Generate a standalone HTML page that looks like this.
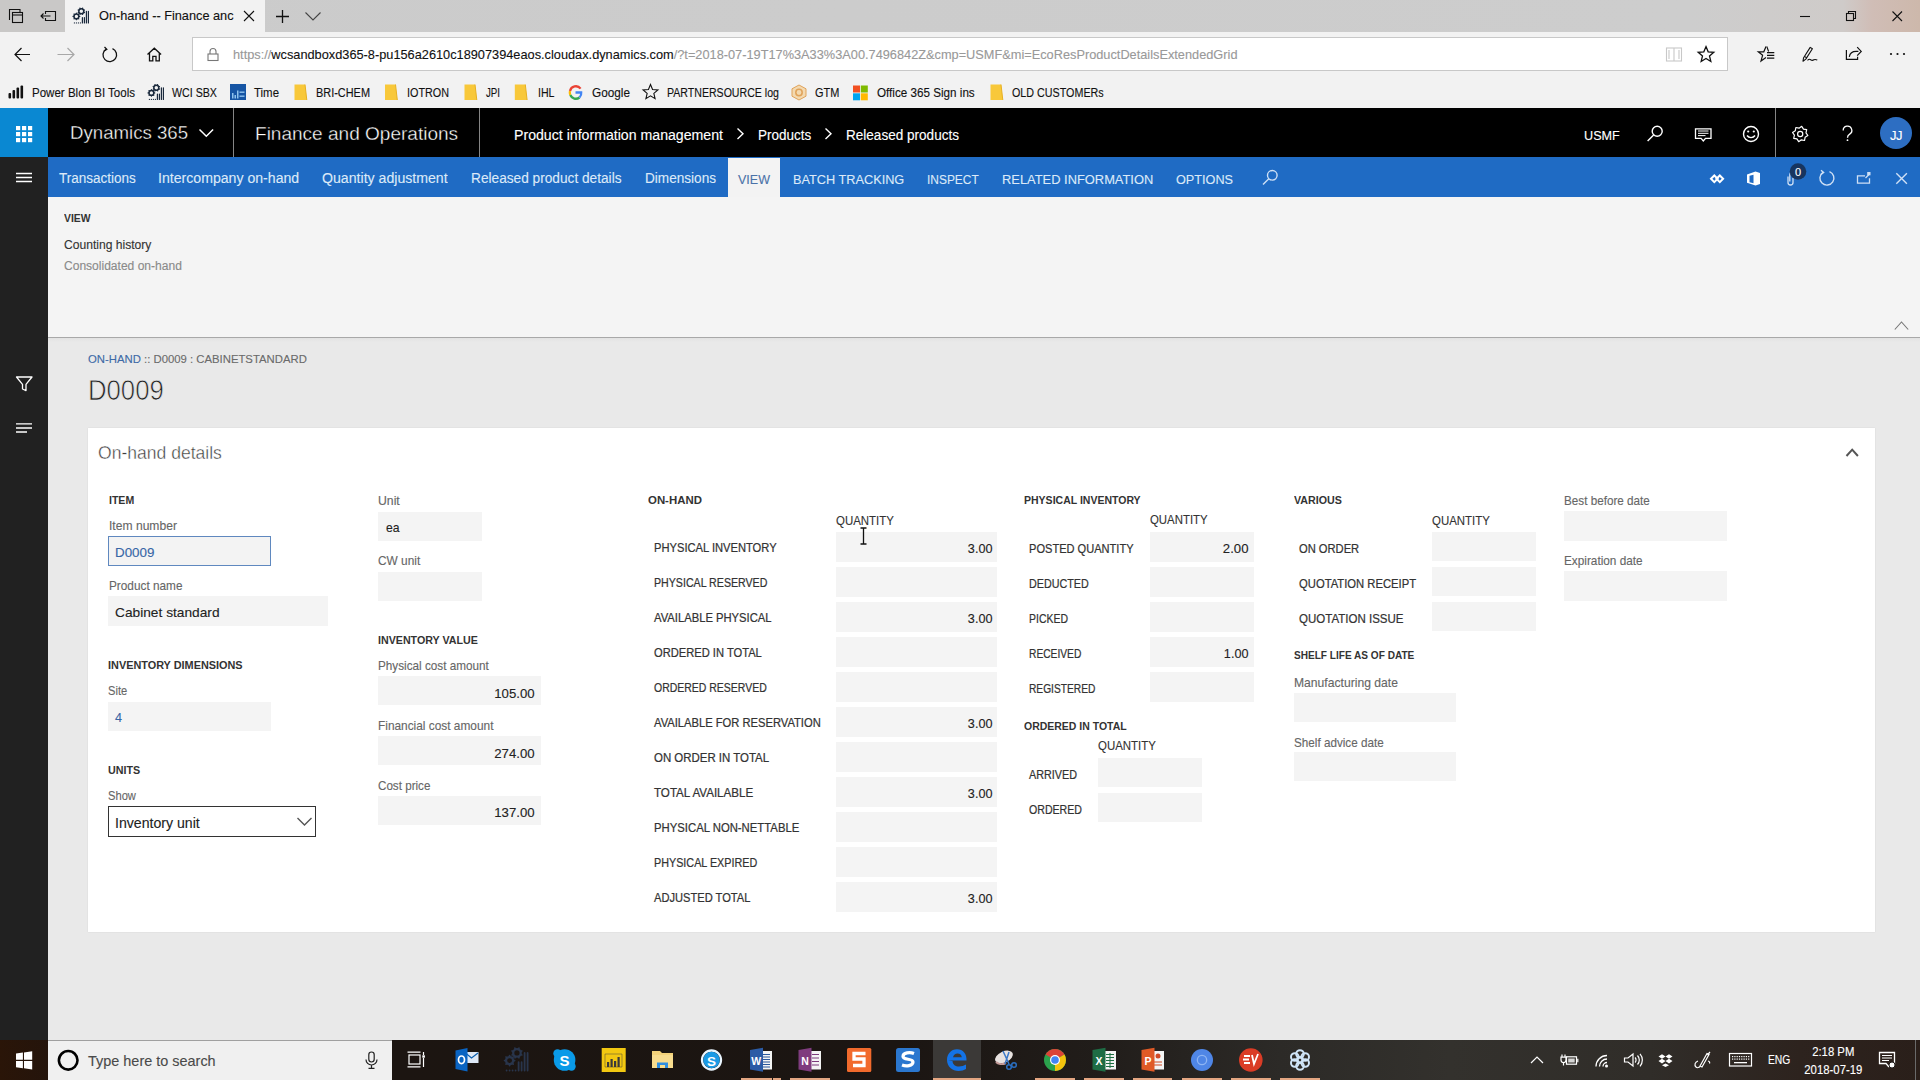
<!DOCTYPE html>
<html><head><meta charset="utf-8"><style>
*{margin:0;padding:0;box-sizing:border-box}
html,body{width:1920px;height:1080px;overflow:hidden;background:#e9e9e9;font-family:"Liberation Sans",sans-serif;color:#333}
.a{position:absolute}
.t{position:absolute;white-space:nowrap;line-height:1;z-index:3;-webkit-text-stroke:0.12px currentColor}
svg{position:absolute;overflow:visible;z-index:2}
</style></head><body>
<div class="a" style="left:0px;top:0px;width:1920px;height:32px;background:linear-gradient(90deg,#cbcbcb 0%,#cdcdcd 88%,#cfcbc9 96%,#d0bdb6 97.5%,#cdb8ab 100%);"></div>
<div class="a" style="left:0px;top:0px;width:65px;height:32px;background:#c9c8c7;"></div>
<div class="a" style="left:65px;top:0px;width:200px;height:32px;background:#f2f2f2;"></div>
<div class="a" style="left:0px;top:32px;width:1920px;height:76px;background:#f2f2f2;"></div>
<div class="a" style="left:192px;top:37px;width:1536px;height:34px;background:#fff;border:1px solid #c8c8c8;"></div>
<div class="a" style="left:0px;top:108px;width:1920px;height:49px;background:#000;"></div>
<div class="a" style="left:0px;top:108px;width:48px;height:49px;background:#0a88d2;"></div>
<div class="a" style="left:48px;top:157px;width:1872px;height:40px;background:#1f6bc4;"></div>
<div class="a" style="left:0px;top:157px;width:48px;height:883px;background:#212121;"></div>
<div class="a" style="left:48px;top:197px;width:1872px;height:141px;background:#f4f4f4;border-bottom:1px solid #a8a8a8;"></div>
<div class="a" style="left:48px;top:338px;width:1872px;height:702px;background:linear-gradient(180deg,#e2e2e2 0px,#e9e9e9 4px,#e9e9e9 100%);"></div>
<div class="a" style="left:88px;top:428px;width:1787px;height:504px;background:#fff;box-shadow:0 0 1.5px rgba(0,0,0,0.10);"></div>
<div class="a" style="left:0px;top:1040px;width:1920px;height:40px;background:linear-gradient(90deg,#2a1508 0px,#24140b 48px,#1c1511 392px,#1b1512 900px,#211d1a 1100px,#2c2a27 1280px,#33312d 1450px,#302d29 1650px,#2d231e 1800px,#2a1f1a 1920px);"></div>
<div class="a" style="left:48px;top:1040px;width:344px;height:40px;background:#f0f0f0;border-top:1px solid #a0a0a0;"></div>
<div class="t" style="left:98.60px;top:9.70px;font-size:12.7px;color:#111;transform:scaleX(1.0044);transform-origin:0 0;">On-hand -- Finance anc</div>
<div class="t" style="left:233.00px;top:48.76px;font-size:12.75px;color:#333;transform:scaleX(1.0012);transform-origin:0 0;"><span style="color:#999">https://</span><span style="color:#111">wcsandboxd365-8-pu156a2610c18907394eaos.cloudax.dynamics.com</span><span style="color:#999">/?t=2018-07-19T17%3A33%3A00.7496842Z&amp;cmp=USMF&amp;mi=EcoResProductDetailsExtendedGrid</span></div>
<div class="t" style="left:32.00px;top:86.80px;font-size:12px;color:#111;transform:scaleX(0.9612);transform-origin:0 0;">Power Blon BI Tools</div>
<div class="t" style="left:172.00px;top:86.80px;font-size:12px;color:#111;transform:scaleX(0.8876);transform-origin:0 0;">WCI SBX</div>
<div class="t" style="left:254.00px;top:86.80px;font-size:12px;color:#111;transform:scaleX(0.9535);transform-origin:0 0;">Time</div>
<div class="t" style="left:316.00px;top:86.80px;font-size:12px;color:#111;transform:scaleX(0.9100);transform-origin:0 0;">BRI-CHEM</div>
<div class="t" style="left:407.00px;top:86.80px;font-size:12px;color:#111;transform:scaleX(0.8997);transform-origin:0 0;">IOTRON</div>
<div class="t" style="left:486.00px;top:86.80px;font-size:12px;color:#111;transform:scaleX(0.8074);transform-origin:0 0;">JPI</div>
<div class="t" style="left:538.00px;top:86.80px;font-size:12px;color:#111;transform:scaleX(0.8842);transform-origin:0 0;">IHL</div>
<div class="t" style="left:592.00px;top:86.80px;font-size:12px;color:#111;transform:scaleX(0.9819);transform-origin:0 0;">Google</div>
<div class="t" style="left:667.30px;top:86.80px;font-size:12px;color:#111;transform:scaleX(0.8818);transform-origin:0 0;">PARTNERSOURCE log</div>
<div class="t" style="left:815.00px;top:86.80px;font-size:12px;color:#111;transform:scaleX(0.9122);transform-origin:0 0;">GTM</div>
<div class="t" style="left:877.20px;top:86.80px;font-size:12px;color:#111;transform:scaleX(0.9721);transform-origin:0 0;">Office 365 Sign ins</div>
<div class="t" style="left:1012.00px;top:86.80px;font-size:12px;color:#111;transform:scaleX(0.8948);transform-origin:0 0;">OLD CUSTOMERs</div>
<div class="t" style="left:69.80px;top:124.12px;font-size:18.8px;color:#fff;transform:scaleX(0.9925);transform-origin:0 0;-webkit-text-stroke:0.35px #000;">Dynamics 365</div>
<div class="t" style="left:255.00px;top:123.88px;font-size:19.2px;color:#fff;transform:scaleX(0.9919);transform-origin:0 0;-webkit-text-stroke:0.35px #000;">Finance and Operations</div>
<div class="t" style="left:514.20px;top:128.00px;font-size:14px;color:#fff;transform:scaleX(1.0097);transform-origin:0 0;">Product information management</div>
<div class="t" style="left:758.25px;top:128.00px;font-size:14px;color:#fff;transform:scaleX(0.9641);transform-origin:0 0;">Products</div>
<div class="t" style="left:846.25px;top:128.00px;font-size:14px;color:#fff;transform:scaleX(0.9678);transform-origin:0 0;">Released products</div>
<div class="t" style="left:1584.20px;top:129.38px;font-size:13.2px;color:#fff;transform:scaleX(0.9593);transform-origin:0 0;">USMF</div>
<div class="t" style="left:59.20px;top:172.37px;font-size:13.8px;color:#dce9f8;transform:scaleX(0.9781);transform-origin:0 0;">Transactions</div>
<div class="t" style="left:158.20px;top:172.37px;font-size:13.8px;color:#dce9f8;transform:scaleX(1.0227);transform-origin:0 0;">Intercompany on-hand</div>
<div class="t" style="left:322.30px;top:172.37px;font-size:13.8px;color:#dce9f8;transform:scaleX(1.0240);transform-origin:0 0;">Quantity adjustment</div>
<div class="t" style="left:471.25px;top:172.37px;font-size:13.8px;color:#dce9f8;transform:scaleX(0.9913);transform-origin:0 0;">Released product details</div>
<div class="t" style="left:644.50px;top:172.37px;font-size:13.8px;color:#dce9f8;transform:scaleX(0.9847);transform-origin:0 0;">Dimensions</div>
<div class="a" style="left:728px;top:158px;width:52px;height:39px;background:#f3f3f3;"></div>
<div class="t" style="left:738.00px;top:173.29px;font-size:13.3px;color:#4a72a8;transform:scaleX(0.9417);transform-origin:0 0;">VIEW</div>
<div class="t" style="left:793.00px;top:173.29px;font-size:13.3px;color:#dce9f8;transform:scaleX(0.9571);transform-origin:0 0;">BATCH TRACKING</div>
<div class="t" style="left:927.00px;top:173.29px;font-size:13.3px;color:#dce9f8;transform:scaleX(0.8976);transform-origin:0 0;">INSPECT</div>
<div class="t" style="left:1001.70px;top:173.29px;font-size:13.3px;color:#dce9f8;transform:scaleX(0.9690);transform-origin:0 0;">RELATED INFORMATION</div>
<div class="t" style="left:1176.00px;top:173.29px;font-size:13.3px;color:#dce9f8;transform:scaleX(0.9524);transform-origin:0 0;">OPTIONS</div>
<div class="t" style="left:63.70px;top:213.45px;font-size:11px;color:#333;font-weight:bold;-webkit-text-stroke:0;transform:scaleX(0.9429);transform-origin:0 0;">VIEW</div>
<div class="t" style="left:64.30px;top:238.64px;font-size:12.3px;color:#333;transform:scaleX(0.9835);transform-origin:0 0;">Counting history</div>
<div class="t" style="left:64.30px;top:259.95px;font-size:12.3px;color:#8a8a8a;transform:scaleX(0.9796);transform-origin:0 0;">Consolidated on-hand</div>
<div class="t" style="left:88.30px;top:353.57px;font-size:11.8px;color:#6b6b6b;transform:scaleX(0.9602);transform-origin:0 0;"><span style="color:#3e6aa6">ON-HAND</span> :: D0009 : CABINETSTANDARD</div>
<div class="t" style="left:88.00px;top:375.95px;font-size:29px;color:#222;transform:scaleX(0.8864);transform-origin:0 0;-webkit-text-stroke:0.75px #e9e9e9;">D0009</div>
<div class="t" style="left:98.20px;top:444.67px;font-size:17.8px;color:#3a3a3a;transform:scaleX(0.9867);transform-origin:0 0;-webkit-text-stroke:0.4px #fff;">On-hand details</div>
<div class="t" style="left:108.50px;top:494.24px;font-size:11.6px;color:#333;font-weight:bold;-webkit-text-stroke:0;transform:scaleX(0.9090);transform-origin:0 0;">ITEM</div>
<div class="t" style="left:108.50px;top:520.36px;font-size:12.4px;color:#666;transform:scaleX(0.9766);transform-origin:0 0;">Item number</div>
<div class="a" style="left:108px;top:536px;width:163px;height:30px;background:#f3f3f3;border:1px solid #5f88bf;"></div>
<div class="t" style="left:115.30px;top:545.94px;font-size:13.6px;color:#3766a6;transform:scaleX(0.9837);transform-origin:0 0;">D0009</div>
<div class="t" style="left:108.50px;top:580.26px;font-size:12.4px;color:#666;transform:scaleX(0.9522);transform-origin:0 0;">Product name</div>
<div class="a" style="left:108px;top:596px;width:220px;height:30px;background:#f4f4f4;"></div>
<div class="t" style="left:115.30px;top:605.84px;font-size:13.6px;color:#222;transform:scaleX(1.0100);transform-origin:0 0;">Cabinet standard</div>
<div class="t" style="left:108.30px;top:659.04px;font-size:11.6px;color:#333;font-weight:bold;-webkit-text-stroke:0;transform:scaleX(0.9383);transform-origin:0 0;">INVENTORY DIMENSIONS</div>
<div class="t" style="left:108.30px;top:685.26px;font-size:12.4px;color:#666;transform:scaleX(0.8976);transform-origin:0 0;">Site</div>
<div class="a" style="left:108px;top:701.5px;width:163px;height:29px;background:#f4f4f4;"></div>
<div class="t" style="left:115.20px;top:710.94px;font-size:13.6px;color:#3766a6;transform:scaleX(0.9274);transform-origin:0 0;">4</div>
<div class="t" style="left:108.30px;top:764.04px;font-size:11.6px;color:#333;font-weight:bold;-webkit-text-stroke:0;transform:scaleX(0.9253);transform-origin:0 0;">UNITS</div>
<div class="t" style="left:108.30px;top:789.86px;font-size:12.4px;color:#666;transform:scaleX(0.9014);transform-origin:0 0;">Show</div>
<div class="a" style="left:108px;top:806px;width:208px;height:31px;background:#fff;border:1px solid #333;"></div>
<div class="t" style="left:115.20px;top:815.80px;font-size:14.0px;color:#222;transform:scaleX(1.0087);transform-origin:0 0;">Inventory unit</div>
<div class="t" style="left:378.00px;top:495.46px;font-size:12.4px;color:#666;transform:scaleX(0.9877);transform-origin:0 0;">Unit</div>
<div class="a" style="left:378px;top:511.5px;width:104px;height:29px;background:#f4f4f4;"></div>
<div class="t" style="left:385.60px;top:521.24px;font-size:13.6px;color:#222;transform:scaleX(0.8969);transform-origin:0 0;">ea</div>
<div class="t" style="left:378.30px;top:555.46px;font-size:12.4px;color:#666;transform:scaleX(0.9573);transform-origin:0 0;">CW unit</div>
<div class="a" style="left:378px;top:571.5px;width:104px;height:29px;background:#f4f4f4;"></div>
<div class="t" style="left:378.00px;top:633.94px;font-size:11.6px;color:#333;font-weight:bold;-webkit-text-stroke:0;transform:scaleX(0.9206);transform-origin:0 0;">INVENTORY VALUE</div>
<div class="t" style="left:378.30px;top:660.06px;font-size:12.4px;color:#666;transform:scaleX(0.9464);transform-origin:0 0;">Physical cost amount</div>
<div class="a" style="left:378px;top:676.3px;width:163px;height:29px;background:#f4f4f4;"></div>
<div class="t" style="right:1385.40px;top:686.54px;font-size:13.6px;color:#222;transform:scaleX(0.9708);transform-origin:100% 0;">105.00</div>
<div class="t" style="left:378.30px;top:720.06px;font-size:12.4px;color:#666;transform:scaleX(0.9578);transform-origin:0 0;">Financial cost amount</div>
<div class="a" style="left:378px;top:736.3px;width:163px;height:29px;background:#f4f4f4;"></div>
<div class="t" style="right:1385.40px;top:746.54px;font-size:13.6px;color:#222;transform:scaleX(0.9708);transform-origin:100% 0;">274.00</div>
<div class="t" style="left:378.30px;top:779.96px;font-size:12.4px;color:#666;transform:scaleX(0.9391);transform-origin:0 0;">Cost price</div>
<div class="a" style="left:378px;top:796.2px;width:163px;height:29px;background:#f4f4f4;"></div>
<div class="t" style="right:1385.40px;top:806.44px;font-size:13.6px;color:#222;transform:scaleX(0.9708);transform-origin:100% 0;">137.00</div>
<div class="t" style="left:648.10px;top:493.94px;font-size:11.6px;color:#333;font-weight:bold;-webkit-text-stroke:0;transform:scaleX(0.9844);transform-origin:0 0;">ON-HAND</div>
<div class="t" style="left:836.10px;top:514.63px;font-size:12.2px;color:#333;transform:scaleX(0.9389);transform-origin:0 0;">QUANTITY</div>
<div class="t" style="left:653.50px;top:542.43px;font-size:12.2px;color:#333;transform:scaleX(0.9156);transform-origin:0 0;-webkit-text-stroke:0.22px #333;">PHYSICAL INVENTORY</div>
<div class="a" style="left:836px;top:532px;width:161px;height:30px;background:#f4f4f4;"></div>
<div class="t" style="right:927.80px;top:542.24px;font-size:13.6px;color:#222;transform:scaleX(0.9300);transform-origin:100% 0;">3.00</div>
<div class="t" style="left:653.50px;top:577.43px;font-size:12.2px;color:#333;transform:scaleX(0.8719);transform-origin:0 0;-webkit-text-stroke:0.22px #333;">PHYSICAL RESERVED</div>
<div class="a" style="left:836px;top:567px;width:161px;height:30px;background:#f4f4f4;"></div>
<div class="t" style="left:653.50px;top:612.43px;font-size:12.2px;color:#333;transform:scaleX(0.9214);transform-origin:0 0;-webkit-text-stroke:0.22px #333;">AVAILABLE PHYSICAL</div>
<div class="a" style="left:836px;top:602px;width:161px;height:30px;background:#f4f4f4;"></div>
<div class="t" style="right:927.80px;top:612.24px;font-size:13.6px;color:#222;transform:scaleX(0.9300);transform-origin:100% 0;">3.00</div>
<div class="t" style="left:653.50px;top:647.43px;font-size:12.2px;color:#333;transform:scaleX(0.9146);transform-origin:0 0;-webkit-text-stroke:0.22px #333;">ORDERED IN TOTAL</div>
<div class="a" style="left:836px;top:637px;width:161px;height:30px;background:#f4f4f4;"></div>
<div class="t" style="left:653.50px;top:682.43px;font-size:12.2px;color:#333;transform:scaleX(0.8593);transform-origin:0 0;-webkit-text-stroke:0.22px #333;">ORDERED RESERVED</div>
<div class="a" style="left:836px;top:672px;width:161px;height:30px;background:#f4f4f4;"></div>
<div class="t" style="left:653.50px;top:717.43px;font-size:12.2px;color:#333;transform:scaleX(0.9175);transform-origin:0 0;-webkit-text-stroke:0.22px #333;">AVAILABLE FOR RESERVATION</div>
<div class="a" style="left:836px;top:707px;width:161px;height:30px;background:#f4f4f4;"></div>
<div class="t" style="right:927.80px;top:717.24px;font-size:13.6px;color:#222;transform:scaleX(0.9300);transform-origin:100% 0;">3.00</div>
<div class="t" style="left:653.50px;top:752.43px;font-size:12.2px;color:#333;transform:scaleX(0.9391);transform-origin:0 0;-webkit-text-stroke:0.22px #333;">ON ORDER IN TOTAL</div>
<div class="a" style="left:836px;top:742px;width:161px;height:30px;background:#f4f4f4;"></div>
<div class="t" style="left:653.50px;top:787.43px;font-size:12.2px;color:#333;transform:scaleX(0.9509);transform-origin:0 0;-webkit-text-stroke:0.22px #333;">TOTAL AVAILABLE</div>
<div class="a" style="left:836px;top:777px;width:161px;height:30px;background:#f4f4f4;"></div>
<div class="t" style="right:927.80px;top:787.24px;font-size:13.6px;color:#222;transform:scaleX(0.9300);transform-origin:100% 0;">3.00</div>
<div class="t" style="left:653.50px;top:822.43px;font-size:12.2px;color:#333;transform:scaleX(0.9286);transform-origin:0 0;-webkit-text-stroke:0.22px #333;">PHYSICAL NON-NETTABLE</div>
<div class="a" style="left:836px;top:812px;width:161px;height:30px;background:#f4f4f4;"></div>
<div class="t" style="left:653.50px;top:857.43px;font-size:12.2px;color:#333;transform:scaleX(0.8847);transform-origin:0 0;-webkit-text-stroke:0.22px #333;">PHYSICAL EXPIRED</div>
<div class="a" style="left:836px;top:847px;width:161px;height:30px;background:#f4f4f4;"></div>
<div class="t" style="left:653.50px;top:892.43px;font-size:12.2px;color:#333;transform:scaleX(0.9123);transform-origin:0 0;-webkit-text-stroke:0.22px #333;">ADJUSTED TOTAL</div>
<div class="a" style="left:836px;top:882px;width:161px;height:30px;background:#f4f4f4;"></div>
<div class="t" style="right:927.80px;top:892.24px;font-size:13.6px;color:#222;transform:scaleX(0.9300);transform-origin:100% 0;">3.00</div>
<div class="t" style="left:1024.00px;top:493.64px;font-size:11.6px;color:#333;font-weight:bold;-webkit-text-stroke:0;transform:scaleX(0.9067);transform-origin:0 0;">PHYSICAL INVENTORY</div>
<div class="t" style="left:1150.00px;top:514.43px;font-size:12.2px;color:#333;transform:scaleX(0.9356);transform-origin:0 0;">QUANTITY</div>
<div class="t" style="left:1029.30px;top:542.73px;font-size:12.2px;color:#333;transform:scaleX(0.9086);transform-origin:0 0;-webkit-text-stroke:0.22px #333;">POSTED QUANTITY</div>
<div class="a" style="left:1150px;top:532px;width:104px;height:30px;background:#f4f4f4;"></div>
<div class="t" style="right:671.70px;top:541.64px;font-size:13.6px;color:#222;transform:scaleX(0.9678);transform-origin:100% 0;">2.00</div>
<div class="t" style="left:1029.30px;top:577.73px;font-size:12.2px;color:#333;transform:scaleX(0.8809);transform-origin:0 0;-webkit-text-stroke:0.22px #333;">DEDUCTED</div>
<div class="a" style="left:1150px;top:567px;width:104px;height:30px;background:#f4f4f4;"></div>
<div class="t" style="left:1029.30px;top:612.73px;font-size:12.2px;color:#333;transform:scaleX(0.8582);transform-origin:0 0;-webkit-text-stroke:0.22px #333;">PICKED</div>
<div class="a" style="left:1150px;top:602px;width:104px;height:30px;background:#f4f4f4;"></div>
<div class="t" style="left:1029.30px;top:647.73px;font-size:12.2px;color:#333;transform:scaleX(0.8397);transform-origin:0 0;-webkit-text-stroke:0.22px #333;">RECEIVED</div>
<div class="a" style="left:1150px;top:637px;width:104px;height:30px;background:#f4f4f4;"></div>
<div class="t" style="right:671.70px;top:646.64px;font-size:13.6px;color:#222;transform:scaleX(0.9300);transform-origin:100% 0;">1.00</div>
<div class="t" style="left:1029.30px;top:682.73px;font-size:12.2px;color:#333;transform:scaleX(0.8373);transform-origin:0 0;-webkit-text-stroke:0.22px #333;">REGISTERED</div>
<div class="a" style="left:1150px;top:672px;width:104px;height:30px;background:#f4f4f4;"></div>
<div class="t" style="left:1024.00px;top:720.24px;font-size:11.6px;color:#333;font-weight:bold;-webkit-text-stroke:0;transform:scaleX(0.9039);transform-origin:0 0;">ORDERED IN TOTAL</div>
<div class="t" style="left:1097.70px;top:740.43px;font-size:12.2px;color:#333;transform:scaleX(0.9405);transform-origin:0 0;">QUANTITY</div>
<div class="t" style="left:1029.30px;top:768.73px;font-size:12.2px;color:#333;transform:scaleX(0.8851);transform-origin:0 0;-webkit-text-stroke:0.22px #333;">ARRIVED</div>
<div class="a" style="left:1098px;top:758.3px;width:104px;height:29px;background:#f4f4f4;"></div>
<div class="t" style="left:1029.30px;top:803.73px;font-size:12.2px;color:#333;transform:scaleX(0.8689);transform-origin:0 0;-webkit-text-stroke:0.22px #333;">ORDERED</div>
<div class="a" style="left:1098px;top:793.3px;width:104px;height:29px;background:#f4f4f4;"></div>
<div class="t" style="left:1294.00px;top:494.34px;font-size:11.6px;color:#333;font-weight:bold;-webkit-text-stroke:0;transform:scaleX(0.9217);transform-origin:0 0;">VARIOUS</div>
<div class="t" style="left:1431.60px;top:514.83px;font-size:12.2px;color:#333;transform:scaleX(0.9372);transform-origin:0 0;">QUANTITY</div>
<div class="t" style="left:1298.75px;top:543.03px;font-size:12.2px;color:#333;transform:scaleX(0.9162);transform-origin:0 0;-webkit-text-stroke:0.22px #333;">ON ORDER</div>
<div class="a" style="left:1431.6px;top:531.6px;width:104px;height:29px;background:#f4f4f4;"></div>
<div class="t" style="left:1298.75px;top:578.03px;font-size:12.2px;color:#333;transform:scaleX(0.9232);transform-origin:0 0;-webkit-text-stroke:0.22px #333;">QUOTATION RECEIPT</div>
<div class="a" style="left:1431.6px;top:566.6px;width:104px;height:29px;background:#f4f4f4;"></div>
<div class="t" style="left:1298.75px;top:613.03px;font-size:12.2px;color:#333;transform:scaleX(0.9452);transform-origin:0 0;-webkit-text-stroke:0.22px #333;">QUOTATION ISSUE</div>
<div class="a" style="left:1431.6px;top:601.6px;width:104px;height:29px;background:#f4f4f4;"></div>
<div class="t" style="left:1294.00px;top:649.34px;font-size:11.6px;color:#333;font-weight:bold;-webkit-text-stroke:0;transform:scaleX(0.8689);transform-origin:0 0;">SHELF LIFE AS OF DATE</div>
<div class="t" style="left:1294.00px;top:676.51px;font-size:12.4px;color:#666;transform:scaleX(0.9798);transform-origin:0 0;">Manufacturing date</div>
<div class="a" style="left:1294px;top:692.5px;width:162px;height:29px;background:#f4f4f4;"></div>
<div class="t" style="left:1294.00px;top:736.51px;font-size:12.4px;color:#666;transform:scaleX(0.9437);transform-origin:0 0;">Shelf advice date</div>
<div class="a" style="left:1294px;top:752px;width:162px;height:29px;background:#f4f4f4;"></div>
<div class="t" style="left:1564.40px;top:495.26px;font-size:12.4px;color:#666;transform:scaleX(0.9438);transform-origin:0 0;">Best before date</div>
<div class="a" style="left:1564px;top:510.5px;width:163px;height:30px;background:#f4f4f4;"></div>
<div class="t" style="left:1564.40px;top:555.26px;font-size:12.4px;color:#666;transform:scaleX(0.9515);transform-origin:0 0;">Expiration date</div>
<div class="a" style="left:1564px;top:570.6px;width:163px;height:30px;background:#f4f4f4;"></div>
<div class="t" style="left:88.30px;top:1054.44px;font-size:14.3px;color:#4a4a4a;transform:scaleX(1.0102);transform-origin:0 0;">Type here to search</div>
<div class="t" style="left:1767.50px;top:1054.27px;font-size:12.5px;color:#fff;transform:scaleX(0.8240);transform-origin:0 0;">ENG</div>
<div class="t" style="right:66.10px;top:1046.03px;font-size:12.2px;color:#fff;transform:scaleX(0.9308);transform-origin:100% 0;">2:18 PM</div>
<div class="t" style="right:58.00px;top:1063.73px;font-size:12.2px;color:#fff;transform:scaleX(0.9310);transform-origin:100% 0;">2018-07-19</div>
<div class="t" style="left:1696px;width:400px;text-align:center;top:129.05px;font-size:13px;color:#fff;letter-spacing:-0.5px;">JJ</div>
<div class="t" style="left:1598px;width:400px;text-align:center;top:167.05px;font-size:11px;color:#fff;">0</div>
<div class="t" style="left:364.6px;width:400px;text-align:center;top:1053.35px;font-size:15px;color:#fff;font-weight:bold;-webkit-text-stroke:0;">S</div>
<div class="t" style="left:511.5px;width:400px;text-align:center;top:1054.62px;font-size:13.5px;color:#fff;font-weight:bold;-webkit-text-stroke:0;">S</div>
<div class="t" style="left:556.3px;width:400px;text-align:center;top:1056.17px;font-size:10.5px;color:#fff;font-weight:bold;-webkit-text-stroke:0;">W</div>
<div class="t" style="left:605px;width:400px;text-align:center;top:1056.17px;font-size:10.5px;color:#fff;font-weight:bold;-webkit-text-stroke:0;">N</div>
<div class="a" style="left:933px;top:1040px;width:48px;height:40px;background:#3b3937;"></div>
<div class="t" style="left:899px;width:400px;text-align:center;top:1056.17px;font-size:10.5px;color:#fff;font-weight:bold;-webkit-text-stroke:0;">X</div>
<div class="t" style="left:948px;width:400px;text-align:center;top:1056.17px;font-size:10.5px;color:#fff;font-weight:bold;-webkit-text-stroke:0;">P</div>
<div class="a" style="left:741px;top:1078px;width:31px;height:2px;background:#e3a682;"></div>
<div class="a" style="left:773px;top:1078px;width:8px;height:2px;background:#e3a682;"></div>
<div class="a" style="left:790px;top:1078px;width:40px;height:2px;background:#e3a682;"></div>
<div class="a" style="left:933px;top:1078px;width:48px;height:2px;background:#e3a682;"></div>
<div class="a" style="left:1035px;top:1078px;width:40px;height:2px;background:#e3a682;"></div>
<div class="a" style="left:1084px;top:1078px;width:40px;height:2px;background:#e3a682;"></div>
<div class="a" style="left:1133px;top:1078px;width:39.40000000000009px;height:2px;background:#e3a682;"></div>
<div class="a" style="left:1182px;top:1078px;width:40px;height:2px;background:#e3a682;"></div>
<div class="a" style="left:1231px;top:1078px;width:40px;height:2px;background:#e3a682;"></div>
<div class="a" style="left:1279.5px;top:1078px;width:40.799999999999955px;height:2px;background:#e3a682;"></div>
<div class="a" style="left:1915px;top:1040px;width:1px;height:40px;background:#6a6a6a;"></div>
<svg width="1920" height="1080" style="position:absolute;left:0;top:0"><g fill="none" stroke="#111" stroke-width="1.1"><path d="M9.5 20V9.5h10.5v2.5"/><rect x="12.5" y="12.5" width="10" height="10"/><path d="M12.5 15h10"/></g><g fill="none" stroke="#111" stroke-width="1.1"><path d="M45.5 14V11.5h10v9h-10V18"/><path d="M41 16h9.5M43.5 13.5L41 16l2.5 2.5"/></g><g transform="translate(68,4)"><circle cx="8.4" cy="12.4" r="2.4" fill="none" stroke="#1b2a3d" stroke-width="1.5"/><circle cx="13.3" cy="7.3" r="2.5" fill="none" stroke="#1b2a3d" stroke-width="1.5"/><g stroke="#1b2a3d" stroke-width="1.1" stroke-linecap="round"><path d="M11.00 12.40L11.80 12.40"/><path d="M15.80 8.33L16.54 8.63"/><path d="M10.24 14.24L10.80 14.80"/><path d="M14.34 9.79L14.65 10.53"/><path d="M8.40 15.00L8.40 15.80"/><path d="M12.27 9.80L11.97 10.54"/><path d="M6.56 14.24L6.00 14.80"/><path d="M10.81 8.34L10.07 8.65"/><path d="M5.80 12.40L5.00 12.40"/><path d="M10.80 6.27L10.06 5.97"/><path d="M6.56 10.56L6.00 10.00"/><path d="M12.26 4.81L11.95 4.07"/><path d="M8.40 9.80L8.40 9.00"/><path d="M14.33 4.80L14.63 4.06"/><path d="M10.24 10.56L10.80 10.00"/><path d="M15.79 6.26L16.53 5.95"/></g><g stroke="#1b2a3d" stroke-width="1.2" stroke-linecap="round"><path d="M14.4 13.5V19M16.4 13.5V19M18.4 7.3V19M20.4 7.3V19M6.4 18.9v0.1M8.4 18.9v0.1M10.4 18.9v0.1M12.4 18.9v0.1"/></g></g><path d="M244 11l10 10M254 11l-10 10" stroke="#111" stroke-width="1.1"/><path d="M282.5 10v13M276 16.5h13" stroke="#111" stroke-width="1.3"/><path d="M305.5 12.5l7.5 7.5 7.5-7.5" fill="none" stroke="#444" stroke-width="1.1"/><path d="M1800 16.5h10" stroke="#111" stroke-width="1.1"/><g fill="none" stroke="#111" stroke-width="1.1"><rect x="1846.5" y="13.5" width="7" height="7"/><path d="M1848.5 13.5v-2h7v7h-2"/></g><path d="M1892.5 11.5l9.5 9.5M1902 11.5l-9.5 9.5" stroke="#111" stroke-width="1.1"/><g fill="none" stroke="#111" stroke-width="1.2"><path d="M15 54.5h15M21.5 48l-6.5 6.5 6.5 6.5"/></g><g fill="none" stroke="#a8a8a8" stroke-width="1.2"><path d="M57.5 54.5h16M67.5 48l6.5 6.5-6.5 6.5"/></g><g fill="none" stroke="#111" stroke-width="1.3"><path d="M106 49.2A6.8 6.8 0 1 0 112.5 48.6"/><path d="M104.5 47l2.3 2.4-2.9 1.6"/></g><g fill="none" stroke="#111" stroke-width="1.3"><path d="M147.5 54.5l6.8-6.3 6.8 6.3M149.5 53v7.8h3.3v-4.5h3.2v4.5h3.3V53"/></g><g fill="none" stroke="#777" stroke-width="1.1"><rect x="208" y="54" width="10" height="6.5"/><path d="M210 54v-2.5a3 3 0 0 1 6 0V54"/></g><g fill="none" stroke="#c8c8c8" stroke-width="1.1"><rect x="1666.5" y="48" width="15" height="13"/><path d="M1674 48v13M1669 50v9M1679 50v9"/></g><polygon points="1706.00,46.60 1708.17,51.81 1713.80,52.27 1709.51,55.94 1710.82,61.43 1706.00,58.49 1701.18,61.43 1702.49,55.94 1698.20,52.27 1703.83,51.81" fill="none" stroke="#111" stroke-width="1.3" stroke-linejoin="miter"/><path d="M1766 46.5L1763.8 51.8H1758.3L1762.6 55.3L1761 61L1766 57.6" fill="none" stroke="#111" stroke-width="1.2" stroke-linejoin="miter"/><path d="M1766.8 46.5L1768.6 51.5" fill="none" stroke="#111" stroke-width="1.1"/><path d="M1767 52.6h7.3M1767 55.4h7.3M1767 58.2h7.3" stroke="#111" stroke-width="1.2"/><g fill="none" stroke="#111" stroke-width="1.1" stroke-linejoin="round"><path d="M1803 61.2l0.6-3.5 6.6-10.3 2.2 1.4-6.6 10.3z"/><path d="M1804.6 56.5l2.2 1.4"/><path d="M1807.5 60.3c1.2-1.2 2.2-1.4 3.2-0.6s2 0.9 3.2 0.1 2-0.4 3.4 0.2"/></g><g fill="none" stroke="#111" stroke-width="1.2"><path d="M1846.4 50v9.4h11.2v-2.6"/><path d="M1849.3 56.8c0.6-3.6 3.6-5.6 7.6-5.4h1.5M1857.2 47.2l4 4.2-4 4.2"/></g><g fill="#111"><circle cx="1891" cy="54" r="1.1"/><circle cx="1897.5" cy="54" r="1.1"/><circle cx="1904" cy="54" r="1.1"/></g><g fill="#111"><rect x="8.5" y="93" width="2.6" height="5.5" rx="1"/><rect x="12.5" y="90" width="2.6" height="8.5" rx="1"/><rect x="16.5" y="87.5" width="2.6" height="11" rx="1"/><rect x="20.5" y="85.5" width="2.6" height="13" rx="1"/></g><g transform="translate(143,80.5)"><circle cx="8.4" cy="12.4" r="2.4" fill="none" stroke="#1b2a3d" stroke-width="1.5"/><circle cx="13.3" cy="7.3" r="2.5" fill="none" stroke="#1b2a3d" stroke-width="1.5"/><g stroke="#1b2a3d" stroke-width="1.1" stroke-linecap="round"><path d="M11.00 12.40L11.80 12.40"/><path d="M15.80 8.33L16.54 8.63"/><path d="M10.24 14.24L10.80 14.80"/><path d="M14.34 9.79L14.65 10.53"/><path d="M8.40 15.00L8.40 15.80"/><path d="M12.27 9.80L11.97 10.54"/><path d="M6.56 14.24L6.00 14.80"/><path d="M10.81 8.34L10.07 8.65"/><path d="M5.80 12.40L5.00 12.40"/><path d="M10.80 6.27L10.06 5.97"/><path d="M6.56 10.56L6.00 10.00"/><path d="M12.26 4.81L11.95 4.07"/><path d="M8.40 9.80L8.40 9.00"/><path d="M14.33 4.80L14.63 4.06"/><path d="M10.24 10.56L10.80 10.00"/><path d="M15.79 6.26L16.53 5.95"/></g><g stroke="#1b2a3d" stroke-width="1.2" stroke-linecap="round"><path d="M14.4 13.5V19M16.4 13.5V19M18.4 7.3V19M20.4 7.3V19M6.4 18.9v0.1M8.4 18.9v0.1M10.4 18.9v0.1M12.4 18.9v0.1"/></g></g><rect x="230" y="84" width="16" height="16" fill="#1655a4"/><g fill="#8fc3ee"><rect x="232" y="93" width="1.5" height="5.5"/><rect x="234.5" y="95" width="1.5" height="3.5"/><rect x="237" y="90.5" width="1.5" height="8"/><rect x="239.5" y="91.5" width="5" height="1.4"/><rect x="239.5" y="95.5" width="5" height="1.4"/></g><path d="M294.5 84.5h10.5l1.8 15.5H294.5z" fill="#f8c83a"/><path d="M305.0 84.5l1.8 15.5" fill="none" stroke="#e8b020" stroke-width="1"/><path d="M385 84.5h10.5l1.8 15.5H385z" fill="#f8c83a"/><path d="M395.5 84.5l1.8 15.5" fill="none" stroke="#e8b020" stroke-width="1"/><path d="M464.5 84.5h10.5l1.8 15.5H464.5z" fill="#f8c83a"/><path d="M475.0 84.5l1.8 15.5" fill="none" stroke="#e8b020" stroke-width="1"/><path d="M514.8 84.5h10.5l1.8 15.5H514.8z" fill="#f8c83a"/><path d="M525.3 84.5l1.8 15.5" fill="none" stroke="#e8b020" stroke-width="1"/><path d="M990.5 84.5h10.5l1.8 15.5H990.5z" fill="#f8c83a"/><path d="M1001.0 84.5l1.8 15.5" fill="none" stroke="#e8b020" stroke-width="1"/><g fill="none" stroke-width="2.3"><path d="M580.6 88.6A6 6 0 0 0 570 91" stroke="#ea4335"/><path d="M570 91A6 6 0 0 0 570.3 95" stroke="#fbbc05"/><path d="M570.3 95A6 6 0 0 0 579.5 97.5" stroke="#34a853"/><path d="M579.5 97.5A6 6 0 0 0 581.2 92.5H575.5" stroke="#4285f4"/></g><polygon points="650.50,84.50 652.56,89.46 657.92,89.89 653.84,93.38 655.08,98.61 650.50,95.81 645.92,98.61 647.16,93.38 643.08,89.89 648.44,89.46" fill="none" stroke="#111" stroke-width="1.1" stroke-linejoin="miter"/><g><polygon points="799,85 806,88.8 806,96.2 799,100 792,96.2 792,88.8" fill="#f3d9b0" stroke="#e0a35a" stroke-width="1"/><circle cx="799" cy="92.5" r="3.2" fill="none" stroke="#e0a35a" stroke-width="1.5"/></g><rect x="853" y="85.5" width="7" height="7" fill="#f25022"/><rect x="860.8" y="85.5" width="7" height="7" fill="#7fba00"/><rect x="853" y="93.3" width="7" height="7" fill="#00a4ef"/><rect x="860.8" y="93.3" width="7" height="7" fill="#ffb900"/><rect x="16" y="126" width="4.2" height="4.2" fill="#fff"/><rect x="16" y="132" width="4.2" height="4.2" fill="#fff"/><rect x="16" y="138" width="4.2" height="4.2" fill="#fff"/><rect x="22" y="126" width="4.2" height="4.2" fill="#fff"/><rect x="22" y="132" width="4.2" height="4.2" fill="#fff"/><rect x="22" y="138" width="4.2" height="4.2" fill="#fff"/><rect x="28" y="126" width="4.2" height="4.2" fill="#fff"/><rect x="28" y="132" width="4.2" height="4.2" fill="#fff"/><rect x="28" y="138" width="4.2" height="4.2" fill="#fff"/><path d="M199.5 129.5l6.8 6.8 6.8-6.8" fill="none" stroke="#fff" stroke-width="1.5"/><path d="M233.5 108v49M479.5 108v49M1775.5 108v49" stroke="#858585" stroke-width="1"/><path d="M737.5 128.5l5.5 5.3-5.5 5.3M825.5 128.5l5.5 5.3-5.5 5.3" fill="none" stroke="#fff" stroke-width="1.4"/><g fill="none" stroke="#fff" stroke-width="1.4"><circle cx="1657.2" cy="131.3" r="5"/><path d="M1653.6 134.9l-6 6"/></g><g fill="none" stroke="#fff" stroke-width="1.3"><path d="M1695.5 128.8h15.5v9.5h-5.5l-2.2 2.7-2.2-2.7h-5.6z"/><path d="M1698 131h10.5M1698 133.3h10.5M1698 135.6h7.5" stroke-width="1"/></g><g fill="none" stroke="#fff" stroke-width="1.4"><circle cx="1751" cy="134" r="7.5"/><path d="M1747 135.5c1.8 2.8 6.2 2.8 8 0"/></g><circle cx="1748.2" cy="131.5" r="1.1" fill="#fff"/><circle cx="1753.8" cy="131.5" r="1.1" fill="#fff"/><polygon points="1807.85,135.52 1805.11,137.28 1804.53,140.49 1801.35,139.79 1798.68,141.65 1796.92,138.91 1793.71,138.33 1794.41,135.15 1792.55,132.48 1795.29,130.72 1795.87,127.51 1799.05,128.21 1801.72,126.35 1803.48,129.09 1806.69,129.67 1805.99,132.85" fill="none" stroke="#fff" stroke-width="1.2" stroke-linejoin="round"/><circle cx="1800.2" cy="134" r="2.6" fill="none" stroke="#fff" stroke-width="1.2"/><path d="M1843.2 130.5a4.3 4.3 0 1 1 6.5 3.6c-1.6 1-2.2 1.8-2.2 3.6" fill="none" stroke="#fff" stroke-width="1.3"/><circle cx="1847.5" cy="140.2" r="0.9" fill="#fff"/><circle cx="1896" cy="133" r="16" fill="#2d6ec2"/><path d="M16 173.5h16M16 177.5h16M16 181.5h16" stroke="#fff" stroke-width="1.3"/><g fill="none" stroke="#cfe0f5" stroke-width="1.4"><circle cx="1272.3" cy="175.3" r="4.8"/><path d="M1268.8 178.8l-5.8 5.8"/></g><g fill="none" stroke="#fff" stroke-width="2"><path d="M1711 178.8l3.3-3.3 3.3 3.3-3.3 3.3z"/><path d="M1716.5 178.8l3.3-3.3 3.3 3.3-3.3 3.3z"/></g><path d="M1747 174.5l8.5-3v14l-8.5-2.8zM1755.5 171.5l4.5 1.5v11l-4.5 1.5" fill="#fff"/><path d="M1749.5 175.8l4-1v8.5l-4-1z" fill="#1f6bc4"/><path d="M1788 176.5v6a2.5 2.5 0 0 0 5 0v-8a1.6 1.6 0 0 0-3.2 0v7" fill="none" stroke="#cfe0f5" stroke-width="1.3"/><circle cx="1798" cy="171.5" r="8.3" fill="#17355f"/><g fill="none" stroke="#cfe0f5" stroke-width="1.4"><path d="M1823 172.3A7 7 0 1 0 1829.5 171.6"/><path d="M1821 170.3l2.6 2.2-2.8 2"/></g><g fill="none" stroke="#cfe0f5" stroke-width="1.3"><path d="M1865 175.8h-7.5v7.4h12v-5"/><path d="M1865.5 178l4-4"/></g><rect x="1867.2" y="172" width="3.3" height="3.3" fill="#cfe0f5"/><path d="M1896.3 173.2l10.6 10.6M1906.9 173.2l-10.6 10.6" stroke="#cfe0f5" stroke-width="1.4"/><path d="M1894.8 329.5l6.7-7.5 6.7 7.5" fill="none" stroke="#777" stroke-width="1.1"/><path d="M1846.5 456l5.7-6.3 5.7 6.3" fill="none" stroke="#555" stroke-width="2"/><path d="M16.5 377h15.5l-6 7.3v6.3l-3.5-1.6v-4.7z" fill="none" stroke="#fff" stroke-width="1.3" stroke-linejoin="round"/><path d="M16 423.8h16M16 428h16M16 432h11" stroke="#fff" stroke-width="1.3"/><path d="M297.5 818l7 7 7-7" fill="none" stroke="#555" stroke-width="1.4"/><path d="M860.5 528h6M860.5 544h6M863.5 528v16" stroke="#111" stroke-width="1.3"/><path d="M16 1053.6l6.9-1v7.2H16zM24 1052.4l8.2-1.2v8.6H24zM16 1061h6.9v7.3l-6.9-1zM24 1061h8.2v8.4l-8.2-1.2z" fill="#fff"/><circle cx="68.2" cy="1060.3" r="9.3" fill="none" stroke="#000" stroke-width="2.6"/><g fill="none" stroke="#222" stroke-width="1.2"><rect x="368.8" y="1052" width="5.4" height="10" rx="2.7"/><path d="M366 1059.5a5.5 5.5 0 0 0 11 0M371.5 1065v3.3M368.5 1068.3h6"/></g><g fill="none" stroke="#fff" stroke-width="1.2"><rect x="409" y="1055" width="11" height="9"/><path d="M407.5 1052.2h13M407.5 1066.8h13M423.5 1052v3M423.5 1058v9"/></g><rect x="422.3" y="1055.3" width="2.6" height="2.4" fill="#fff"/><rect x="465" y="1052" width="13.5" height="11" fill="#dfe9f7"/><path d="M465.5 1053l6 5 6.5-5" fill="none" stroke="#0a5fb0" stroke-width="1.2"/><path d="M455.5 1050.5l12-2.5v23.5l-12-2.5z" fill="#0a64c2"/><ellipse cx="461.5" cy="1059.8" rx="3" ry="3.8" fill="none" stroke="#fff" stroke-width="1.7"/><g opacity="0.55"><g transform="translate(497,1042) scale(1.5)"><circle cx="8.4" cy="12.4" r="2.4" fill="none" stroke="#34507c" stroke-width="1.5"/><circle cx="13.3" cy="7.3" r="2.5" fill="none" stroke="#34507c" stroke-width="1.5"/><g stroke="#34507c" stroke-width="1.1" stroke-linecap="round"><path d="M11.00 12.40L11.80 12.40"/><path d="M15.80 8.33L16.54 8.63"/><path d="M10.24 14.24L10.80 14.80"/><path d="M14.34 9.79L14.65 10.53"/><path d="M8.40 15.00L8.40 15.80"/><path d="M12.27 9.80L11.97 10.54"/><path d="M6.56 14.24L6.00 14.80"/><path d="M10.81 8.34L10.07 8.65"/><path d="M5.80 12.40L5.00 12.40"/><path d="M10.80 6.27L10.06 5.97"/><path d="M6.56 10.56L6.00 10.00"/><path d="M12.26 4.81L11.95 4.07"/><path d="M8.40 9.80L8.40 9.00"/><path d="M14.33 4.80L14.63 4.06"/><path d="M10.24 10.56L10.80 10.00"/><path d="M15.79 6.26L16.53 5.95"/></g><g stroke="#34507c" stroke-width="1.2" stroke-linecap="round"><path d="M14.4 13.5V19M16.4 13.5V19M18.4 7.3V19M20.4 7.3V19M6.4 18.9v0.1M8.4 18.9v0.1M10.4 18.9v0.1M12.4 18.9v0.1"/></g></g></g><circle cx="564.6" cy="1060" r="10.8" fill="#0a9ae8"/><circle cx="557.5" cy="1053.5" r="4.2" fill="#0a9ae8"/><circle cx="571.5" cy="1066.5" r="4.2" fill="#0a9ae8"/><rect x="601.7" y="1048" width="24" height="24" fill="#f2c811"/><g fill="#3a3a3a"><rect x="607" y="1062" width="2.2" height="5"/><rect x="610.5" y="1059" width="2.2" height="8"/><rect x="614" y="1061" width="2.2" height="6"/><rect x="617.5" y="1057" width="2.2" height="10"/></g><path d="M605 1054h17v13h-17z" fill="none" stroke="#3a3a3a" stroke-width="0.8" opacity="0.6"/><path d="M652 1051h8l2 2h11v15h-21z" fill="#f3d27a"/><rect x="652" y="1055" width="21" height="13" fill="#f8dc8e"/><path d="M657 1068v-5.5h11v5.5h-3v-3h-5v3z" fill="#2f8ee0"/><g fill="none" stroke="#eaf6ff" stroke-width="2.3"><circle cx="711.5" cy="1060" r="9.5"/></g><circle cx="711.5" cy="1060" r="8.3" fill="#1a9ae6"/><rect x="758" y="1051" width="14" height="18.5" fill="#f4f4f4"/><g stroke="#2b579a" stroke-width="1"><path d="M763 1054.5h7M763 1057h7M763 1059.5h7M763 1062h7M763 1064.5h7M763 1067h7"/></g><path d="M750 1050l13-2.2v24l-13-2.2z" fill="#2b5ba5"/><rect x="807" y="1051" width="14" height="18.5" fill="#f4f4f4"/><g stroke="#7b3a7b" stroke-width="1.2"><path d="M812 1054.5h7M812 1058h7M812 1061.5h7M812 1065h7"/></g><path d="M798.5 1050l13-2.2v24l-13-2.2z" fill="#7f3c7e"/><rect x="847" y="1048" width="24.3" height="24" rx="1.5" fill="#f26a2c"/><path d="M865.5 1053.5h-11.5v5.5h10v6.5h-11" fill="none" stroke="#fff" stroke-width="3.3"/><rect x="896" y="1048" width="24" height="24" rx="2.5" fill="#2b77cf"/><path d="M914 1053.5c-4-1.5-11-1-11 3s10 1.5 10 5.5-7 4.5-11 3" fill="none" stroke="#fff" stroke-width="3.2"/><path d="M948 1060.5h18.5c0.5-6.5-3.5-11.3-9.5-11.3-6 0-10 5-10 10.5 0 7 5.5 11.3 11.5 11.3 3 0 5.5-0.8 7.5-2v-4.5c-2 1.3-4.5 2-7 2-3.5 0-6.3-1.8-6.5-5.5h-0.5M953 1057.3c0.5-2.3 2.3-3.8 4.5-3.8 2.5 0 4.1 1.5 4.3 3.8z" fill="#1473e6" fill-rule="evenodd"/><ellipse cx="1004" cy="1057" rx="9.5" ry="5.5" fill="#e8e2e0" transform="rotate(-25 1004 1057)"/><path d="M996 1062c2 2 6 3 10 1" fill="none" stroke="#c49a98" stroke-width="2"/><path d="M1003 1051l6 13M1009 1052l-4 12" stroke="#3a78c8" stroke-width="1.5"/><circle cx="1009" cy="1067" r="2.3" fill="none" stroke="#2a6ec0" stroke-width="1.5"/><circle cx="1014" cy="1065" r="2.3" fill="none" stroke="#2a6ec0" stroke-width="1.5"/><circle cx="1055" cy="1060" r="11" fill="#2ba24c"/><path d="M1055 1060L1045.5 1054.5A11 11 0 0 1 1064.5 1054.5z" fill="#db4437"/><path d="M1055 1060L1064.5 1054.5A11 11 0 0 1 1055 1071z" fill="#f4c20d"/><circle cx="1055" cy="1060" r="5" fill="#fff"/><circle cx="1055" cy="1060" r="3.8" fill="#4285f4"/><rect x="1102" y="1051" width="14" height="18.5" fill="#f4f4f4"/><g stroke="#1d6f42" stroke-width="1"><path d="M1106 1054.5h8M1106 1057.5h8M1106 1060.5h8M1106 1063.5h8M1106 1066.5h8M1110 1053v15"/></g><path d="M1092.5 1050l13-2.2v24l-13-2.2z" fill="#1e6d45"/><rect x="1150" y="1051" width="14" height="18.5" fill="#f4f4f4"/><g stroke="#d04a25" stroke-width="1.1"><path d="M1154 1062h8M1154 1065h8"/></g><circle cx="1158" cy="1056" r="2.5" fill="#d04a25"/><path d="M1141.5 1050l13-2.2v24l-13-2.2z" fill="#e05a26"/><circle cx="1202" cy="1060" r="11" fill="#4f86e6"/><circle cx="1202" cy="1060" r="5.3" fill="#8fb5f3"/><circle cx="1202" cy="1060" r="4" fill="#4f86e6"/><circle cx="1250.8" cy="1060" r="11.8" fill="#da3c26"/><path d="M1244 1056h6M1243 1059.5h6M1244 1063h6M1252 1055l2 9 4-10" fill="none" stroke="#fff" stroke-width="1.8"/><g fill="none" stroke="#cfe4f7" stroke-width="2"><circle cx="1300" cy="1060" r="3"/><circle cx="1305.20" cy="1063.00" r="3.8"/><circle cx="1300.00" cy="1066.00" r="3.8"/><circle cx="1294.80" cy="1063.00" r="3.8"/><circle cx="1294.80" cy="1057.00" r="3.8"/><circle cx="1300.00" cy="1054.00" r="3.8"/><circle cx="1305.20" cy="1057.00" r="3.8"/></g><path d="M1531 1063l6-6 6 6" fill="none" stroke="#fff" stroke-width="1.2"/><g fill="none" stroke="#fff" stroke-width="1.2"><rect x="1566.5" y="1056.8" width="10" height="7.4"/><path d="M1577.8 1058.8v3.4"/><path d="M1562 1054.5v2.5M1565 1054.5v2.5"/><path d="M1561 1057.2h5v2.8a2.5 2.5 0 0 1-5 0z"/><path d="M1563.5 1062.5v3"/></g><rect x="1568.2" y="1058.5" width="6.5" height="4" fill="#fff" opacity="0.8"/><g fill="none" stroke="#fff" stroke-width="1.3"><path d="M1596 1066.5a11 11 0 0 1 11-11"/><path d="M1599.5 1066.5a7.5 7.5 0 0 1 7.5-7.5"/><path d="M1603 1066.5a4 4 0 0 1 4-4"/></g><circle cx="1606.5" cy="1066" r="1.5" fill="#fff"/><g fill="none" stroke="#fff" stroke-width="1.2"><path d="M1624.5 1058h3.5l5-4v12l-5-4h-3.5z"/><path d="M1635 1057.5a3.5 3.5 0 0 1 0 5M1637.5 1055.5a6.5 6.5 0 0 1 0 9M1640 1053.8a9.5 9.5 0 0 1 0 12.5"/></g><g fill="#fff"><path d="M1662 1054.2l-3.5 2.3 3.5 2.3 3.5-2.3zM1669 1054.2l-3.5 2.3 3.5 2.3 3.5-2.3zM1662 1058.8l-3.5 2.3 3.5 2.3 3.5-2.3zM1669 1058.8l-3.5 2.3 3.5 2.3 3.5-2.3zM1665.5 1063.6l-3.5 1.7 3.5 1.7 3.5-1.7z"/></g><g fill="none" stroke="#fff" stroke-width="1.2"><path d="M1700 1066l7-12.5 2 1-7 12.5z"/><path d="M1707.5 1055l2.5-3"/><path d="M1698 1061c-3 1-4 4-2 6 1 1 3 0.5 4-0.5"/><path d="M1708 1061c1.5 0.5 2 1.5 1.5 2.5"/></g><g fill="none" stroke="#fff" stroke-width="1.2"><rect x="1729.5" y="1053.5" width="22" height="12.5"/></g><g fill="#fff"><rect x="1732.0" y="1056" width="1.2" height="1.2"/><rect x="1732.0" y="1058.5" width="1.2" height="1.2"/><rect x="1734.3" y="1056" width="1.2" height="1.2"/><rect x="1734.3" y="1058.5" width="1.2" height="1.2"/><rect x="1736.6" y="1056" width="1.2" height="1.2"/><rect x="1736.6" y="1058.5" width="1.2" height="1.2"/><rect x="1738.9" y="1056" width="1.2" height="1.2"/><rect x="1738.9" y="1058.5" width="1.2" height="1.2"/><rect x="1741.2" y="1056" width="1.2" height="1.2"/><rect x="1741.2" y="1058.5" width="1.2" height="1.2"/><rect x="1743.5" y="1056" width="1.2" height="1.2"/><rect x="1743.5" y="1058.5" width="1.2" height="1.2"/><rect x="1745.8" y="1056" width="1.2" height="1.2"/><rect x="1745.8" y="1058.5" width="1.2" height="1.2"/><rect x="1748.1" y="1056" width="1.2" height="1.2"/><rect x="1748.1" y="1058.5" width="1.2" height="1.2"/><rect x="1734" y="1062" width="13" height="1.3"/></g><g fill="none" stroke="#fff" stroke-width="1.3"><path d="M1879.5 1052.5h15v11h-3.5l-2.5 3-2.5-3h-6.5z"/></g><path d="M1882 1055.5h10M1882 1058h10M1882 1060.5h7" stroke="#fff" stroke-width="1"/><circle cx="1892" cy="1065" r="3" fill="#fff" stroke="#1e1a18" stroke-width="1"/></svg>
</body></html>
